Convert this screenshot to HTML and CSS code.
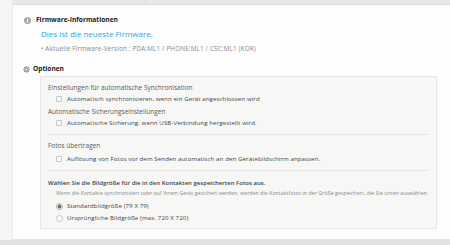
FILE: index.html
```html
<!DOCTYPE html>
<html lang="de">
<head>
<meta charset="utf-8">
<link rel="stylesheet" href="styles.css">
</head>
<body>
<div class="page">
  <div class="tabs"><div class="tab"></div><div class="tab tab-rest"></div></div>
  <div class="panel">
    <div class="section">
      <div class="title">
        <svg class="ico" viewBox="0 0 10 10" width="7" height="7"><circle cx="5" cy="5" r="5" fill="#a9a9a9"/><rect x="4.2" y="4.2" width="1.6" height="3.8" fill="#fff"/><rect x="4.2" y="2" width="1.6" height="1.5" fill="#fff"/></svg>
        <span>Firmware-Informationen</span>
      </div>
      <div class="latest">Dies ist die neueste Firmware.</div>
      <div class="version">• Aktuelle Firmware-Version : PDA:ML1 / PHONE:ML1 / CSC:ML1 (KOR)</div>
    </div>
    <div class="section second">
      <div class="title">
        <svg class="ico gear" viewBox="0 0 10 10" width="7" height="7"><g fill="#9a9a9a"><circle cx="5" cy="5" r="3.4"/><rect x="4.1" y="0.3" width="1.8" height="9.4"/><rect x="0.3" y="4.1" width="9.4" height="1.8"/><rect x="4.1" y="0.3" width="1.8" height="9.4" transform="rotate(45 5 5)"/><rect x="4.1" y="0.3" width="1.8" height="9.4" transform="rotate(-45 5 5)"/></g><circle cx="5" cy="5" r="1.4" fill="#fff"/></svg>
        <span>Optionen</span>
      </div>
      <div class="box">
        <div class="group">
          <div class="label first">Einstellungen für automatische Synchronisation</div>
          <div class="opt"><span class="cb"></span>Automatisch synchronisieren, wenn ein Gerät angeschlossen wird</div>
          <div class="label">Automatische Sicherungseinstellungen</div>
          <div class="opt"><span class="cb"></span>Automatische Sicherung, wenn USB-Verbindung hergestellt wird.</div>
        </div>
        <div class="group">
          <div class="label sect">Fotos übertragen</div>
          <div class="opt"><span class="cb"></span>Auflösung von Fotos vor dem Senden automatisch an den Gerätebildschirm anpassen.</div>
        </div>
        <div class="group last">
          <div class="label strong">Wählen Sie die Bildgröße für die in den Kontakten gespeicherten Fotos aus.</div>
          <div class="note">Wenn die Kontakte synchronisiert oder auf Ihrem Gerät gesichert werden, werden die Kontaktfotos in der Größe gespeichert, die Sie unten auswählen.</div>
          <div class="opt radio-opt first-radio"><span class="rb on"></span>Standardbildgröße (79 X 79)</div>
          <div class="opt radio-opt"><span class="rb"></span>Ursprüngliche Bildgröße (max. 720 X 720)</div>
        </div>
      </div>
    </div>
  </div>
  <div class="footer"></div>
</div>
</body>
</html>
```
FILE: styles.css
```css
html, body { margin: 0; padding: 0; }
body {
  background: #f5f5f5;
  font-family: "Open Sans", "Noto Sans", sans-serif;
  color: #444;
  width: 450px;
  height: 245px;
  overflow: hidden;
}
.page { padding-left: 12px; }
.tabs {
  display: flex;
  height: 4px;
  background: #e8e8e8;
  border-bottom: 1px solid #dedede;
}
.tab { width: 133px; border-right: 1px solid #d8d8d8; }
.tab-rest { flex: 1; border-right: none; }
.panel {
  background: #fdfdfd;
  height: 235px;
  border-left: 1px solid #ececec;
  box-sizing: border-box;
  padding: 10px 13px 0 10px;
  border-bottom: 1px solid #e4e4e4;
}
.footer { height: 5px; background: #e2e2e2; margin-left: -12px; }
.title {
  display: flex;
  align-items: center;
  gap: 5px;
  font-size: 6.6px;
  font-weight: 700;
  color: #222;
  height: 10px;
  line-height: 10px;
}
.title .ico { margin-left: 1px; }
.second .title { gap: 3px; }
.second .title .ico { margin-left: 0; }
.latest {
  color: #2aa5df;
  font-size: 8px;
  margin: 4px 0 0 18px;
  line-height: 10px;
}
.version {
  color: #888;
  font-size: 6.3px;
  letter-spacing: 0.18px;
  margin: 6px 0 0 18px;
  line-height: 8px;
}
.section.second { margin-top: 11px; }
.box {
  margin: 2px 0 0 17px;
  background: #f7f7f6;
  border: 1px solid #e6e6e6;
  padding: 5px 7px 0 7px;
  height: 153px;
  box-sizing: border-box;
}
.group { border-bottom: 1px solid #e6e6e6; padding-bottom: 6px; }
.group.last { border-bottom: none; }
.label {
  font-size: 6.5px;
  color: #5a5a5a;
  line-height: 12px;
  margin-top: 2px;
  white-space: nowrap;
}
.label.first { margin-top: 0; }
.label.sect { margin-top: 5px; }
.label.strong { font-weight: 600; color: #444; font-size: 6px; margin-top: 6px; }
.note { font-size: 5.2px; letter-spacing: 0.06px; color: #888; line-height: 9px; padding-left: 8px; white-space: nowrap; }
.opt {
  display: flex;
  align-items: center;
  gap: 5px;
  font-size: 6.15px;
  letter-spacing: 0.08px;
  color: #444;
  line-height: 10px;
  padding-left: 8px;
  white-space: nowrap;
}
.label.sect + .opt { margin-top: 2px; }
.cb {
  width: 4px; height: 4px;
  border: 1px solid #c4c4c4;
  background: #fff;
  border-radius: 1px;
  flex: none;
}
.radio-opt { margin-top: 2px; gap: 4px; }
.radio-opt.first-radio { margin-top: 3px; }
.rb {
  width: 5px; height: 5px;
  border: 1px solid #c4c4c4;
  background: #fff;
  border-radius: 50%;
  flex: none;
}
.rb.on { background: radial-gradient(circle, #6f6f6f 0 1.8px, #fff 2.2px); border-color: #aaa; }
```
